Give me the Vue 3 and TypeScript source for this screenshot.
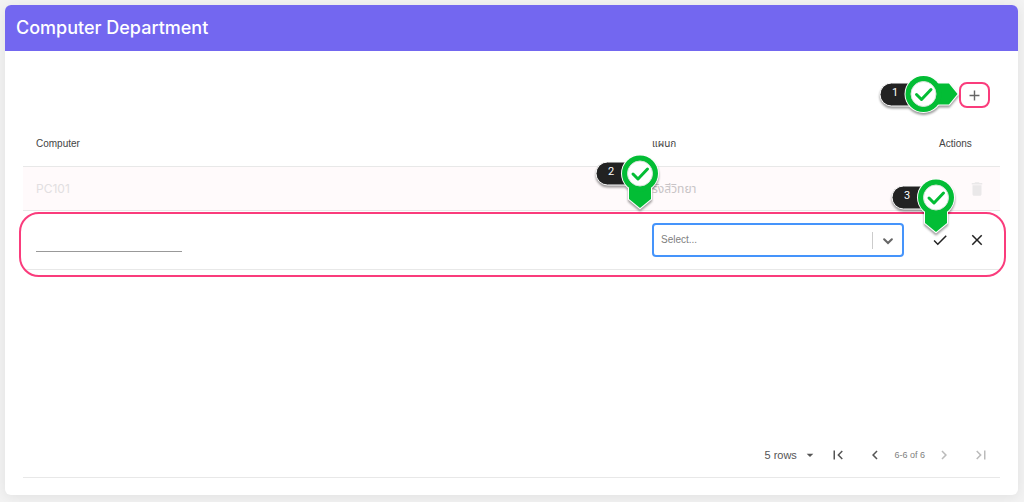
<script setup lang="ts">
import { ref } from 'vue'

interface Computer {
  name: string
  department: string
}

const rows: Computer[] = [{ name: 'PC101', department: 'รังสีวิทยา' }]
const departments = ['รังสีวิทยา']
const name = ref('')
const department = ref('')
const pageSize = ref(5)
</script>

<template>
  <main class="page">
    <section class="card">
      <header class="card-header"><h1>Computer Department</h1></header>
      <div class="card-body">
        <div class="toolbar">
          <div class="anchor">
            <button class="add" type="button" aria-label="Add row">
              <svg width="17" height="17" viewBox="0 0 24 24"><path d="M19 13h-6v6h-2v-6H5v-2h6V5h2v6h6z" /></svg>
            </button>
            <svg class="callout callout-add" width="92" height="50" viewBox="0 0 92 50">
              <g class="shape">
                <rect class="pill" x="4" y="14" width="46" height="23" rx="11.5" />
                <path class="pin" d="M49 13.500h24.500l9.500 11.500-9.500 11.500H49z" />
                <circle class="ring" cx="47.500" cy="25" r="19" />
                <path class="pin-core" d="M49 14.500h24l8.500 10.500-8.500 10.500H49z" />
                <circle class="ring-core" cx="47.500" cy="25" r="18" />
                <circle class="disc" cx="47.500" cy="25" r="12.500" />
                <path class="tick" d="M40.500 25.500l5 5 9.500-10" />
              </g>
              <text x="19" y="27">1</text>
            </svg>
          </div>
        </div>

        <div class="table-wrap">
          <table>
            <thead>
              <tr>
                <th>Computer</th>
                <th class="col-dept">แผนก</th>
                <th class="col-actions">Actions</th>
              </tr>
            </thead>
            <tbody>
              <tr v-for="row in rows" :key="row.name" class="saved">
                <td class="pc">{{ row.name }}</td>
                <td class="dept">{{ row.department }}</td>
                <td class="actions">
                  <div class="buttons">
                    <button type="button" disabled aria-label="Delete">
                      <svg width="18" height="18" viewBox="0 0 24 24"><path d="M6 19c0 1.100.9 2 2 2h8c1.100 0 2-.9 2-2V7H6zM19 4h-3.500l-1-1h-5l-1 1H5v2h14z" /></svg>
                    </button>
                  </div>
                </td>
              </tr>
              <tr class="editing">
                <td>
                  <div class="highlight"></div>
                  <input v-model="name" class="name" type="text" aria-label="Computer" />
                </td>
                <td>
                  <div class="select anchor">
                    <select v-model="department" aria-label="แผนก">
                      <option value="">Select...</option>
                      <option v-for="d in departments" :key="d" :value="d">{{ d }}</option>
                    </select>
                    <span class="indicator">
                      <svg width="14" height="14" viewBox="0 0 20 20"><path d="M4.500 7.500l5.500 5.300 5.500-5.300" /></svg>
                    </span>
                    <svg class="callout callout-dept" width="76" height="64" viewBox="0 0 76 64">
                      <g class="shape">
                        <rect class="pill" x="4" y="12" width="46" height="23" rx="11.500" />
                        <path class="pin" d="M36 26v23.500L48 59.500l12-10V26z" />
                        <circle class="ring" cx="48" cy="23.500" r="19" />
                        <path class="pin-core" d="M37 26v23L48 58l11-9V26z" />
                        <circle class="ring-core" cx="48" cy="23.500" r="18" />
                        <circle class="disc" cx="48" cy="23.500" r="12.500" />
                        <path class="tick" d="M41 24l5 5 9.500-10" />
                      </g>
                      <text x="19" y="25">2</text>
                    </svg>
                  </div>
                </td>
                <td class="actions">
                  <div class="buttons anchor">
                    <button type="button" aria-label="Save">
                      <svg width="18" height="18" viewBox="0 0 24 24"><path d="M9 16.170L4.830 12l-1.420 1.410L9 19 21 7l-1.410-1.410z" /></svg>
                    </button>
                    <button type="button" aria-label="Cancel">
                      <svg width="18" height="18" viewBox="0 0 24 24"><path d="M19 6.410L17.590 5 12 10.590 6.410 5 5 6.410 10.590 12 5 17.590 6.410 19 12 13.410 17.590 19 19 17.590 13.410 12z" /></svg>
                    </button>
                    <svg class="callout callout-save" width="76" height="64" viewBox="0 0 76 64">
                      <g class="shape">
                        <rect class="pill" x="4" y="12" width="46" height="23" rx="11.500" />
                        <path class="pin" d="M36 26v23.500L48 59.500l12-10V26z" />
                        <circle class="ring" cx="48" cy="23.500" r="19" />
                        <path class="pin-core" d="M37 26v23L48 58l11-9V26z" />
                        <circle class="ring-core" cx="48" cy="23.500" r="18" />
                        <circle class="disc" cx="48" cy="23.500" r="12.500" />
                        <path class="tick" d="M41 24l5 5 9.500-10" />
                      </g>
                      <text x="19" y="25">3</text>
                    </svg>
                  </div>
                </td>
              </tr>
            </tbody>
          </table>
        </div>

        <nav class="pager" aria-label="Pagination">
          <div class="page-size">
            <select v-model="pageSize" aria-label="Rows per page">
              <option :value="5">5 rows</option>
              <option :value="10">10 rows</option>
            </select>
            <svg width="16" height="16" viewBox="0 0 24 24"><path d="M7 10l5 5 5-5z" /></svg>
          </div>
          <button type="button" aria-label="First page">
            <svg width="18" height="18" viewBox="0 0 24 24"><path d="M18.410 16.590L13.820 12l4.590-4.590L17 6l-6 6 6 6zM6 6h2v12H6z" /></svg>
          </button>
          <button type="button" aria-label="Previous page">
            <svg width="18" height="18" viewBox="0 0 24 24"><path d="M15.410 7.410L14 6l-6 6 6 6 1.410-1.410L10.830 12z" /></svg>
          </button>
          <span class="range">6-6 of 6</span>
          <button type="button" disabled aria-label="Next page">
            <svg width="18" height="18" viewBox="0 0 24 24"><path d="M10 6L8.590 7.410 13.170 12l-4.580 4.590L10 18l6-6z" /></svg>
          </button>
          <button type="button" disabled aria-label="Last page">
            <svg width="18" height="18" viewBox="0 0 24 24"><path d="M5.590 7.410L10.180 12l-4.590 4.590L7 18l6-6-6-6zM16 6h2v12h-2z" /></svg>
          </button>
        </nav>
      </div>
    </section>
  </main>
</template>

<style>
body {
  margin: 0;
  background: #f3f3f3;
}
</style>

<style scoped>
* {
  box-sizing: border-box;
}

.page {
  display: flex;
  min-height: 100vh;
  padding: 5px 6px 7px 5px;
  font: 10px/16px 'Liberation Sans', 'Noto Sans Thai', sans-serif;
  color: #444;
}

.card {
  flex: 1;
  display: flex;
  flex-direction: column;
  border-radius: 6px;
  background: #fff;
  box-shadow: 0 2px 14px rgba(0, 0, 0, 0.08);
}

.card-header {
  height: 46px;
  padding: 0 11px;
  display: flex;
  align-items: center;
  border-radius: 6px 6px 0 0;
  background: #7367f0;
}

h1 {
  margin: 0;
  font: 500 18px/24px Inter, sans-serif;
  color: #fff;
}

.card-body {
  flex: 1;
  display: flex;
  flex-direction: column;
  padding: 31px 18px 17px;
}

button {
  display: grid;
  place-items: center;
  padding: 0;
  border: 0;
  background: none;
  color: inherit;
}

button svg,
.page-size svg {
  fill: currentColor;
}

.anchor {
  position: relative;
}

.toolbar {
  display: flex;
  justify-content: flex-end;
  padding-right: 10px;
}

.add {
  width: 31px;
  height: 26px;
  border: 2px solid #fa3c7c;
  border-radius: 8px;
  color: #666;
}

.table-wrap {
  flex: 1;
  padding-top: 13px;
}

table {
  width: 100%;
  table-layout: fixed;
  border-collapse: separate;
  border-spacing: 0;
}

th,
td {
  padding: 0 13px;
  border-bottom: 1px solid #e8e8e8;
  text-align: left;
  font-weight: 400;
}

th {
  height: 46px;
}

.col-dept {
  width: 278px;
}

.col-actions {
  width: 83px;
  padding: 0 0 0 22px;
}

.saved td {
  height: 44px;
  background: #fffafb;
  color: #e2dfe1;
}

.saved .pc {
  font: 12px/16px Inter, sans-serif;
}

.saved .dept {
  font-size: 12px;
  color: #c8c4c6;
}

.editing {
  position: relative;
}

.editing td {
  height: 59px;
}

.highlight {
  position: absolute;
  inset: 1px -6px -7px -4px;
  border: 2px solid #fa3c7c;
  border-radius: 20px;
  pointer-events: none;
}

.name {
  display: block;
  width: 146px;
  height: 24px;
  padding: 0;
  border: 0;
  border-bottom: 1px solid #999;
  background: none;
  font: inherit;
  outline: 0;
}

.select {
  display: flex;
}

.select select {
  flex: 1;
  height: 34px;
  padding: 0 40px 0 7px;
  border: 2px solid #4594fb;
  border-radius: 4px;
  appearance: none;
  background: #fff;
  font: inherit;
  color: #808080;
}

.indicator {
  position: absolute;
  top: 9px;
  right: 1px;
  bottom: 8px;
  width: 31px;
  display: grid;
  place-items: center;
  border-left: 1px solid #ccc;
  pointer-events: none;
}

.indicator path {
  fill: none;
  stroke: #666;
  stroke-width: 3;
  stroke-linecap: round;
}

td.actions {
  padding: 0 14px;
  color: #222;
}

.saved td.actions {
  color: #eae8e9;
}

.buttons {
  display: flex;
  justify-content: flex-end;
  gap: 19px;
}

.callout {
  position: absolute;
  z-index: 2;
  pointer-events: none;
}

.callout-add {
  top: -13px;
  left: -83px;
}

.callout-dept {
  top: -73px;
  left: -60px;
}

.callout-save {
  top: -57px;
  left: -43px;
}

.shape {
  filter: drop-shadow(0 2px 1px rgba(0, 0, 0, 0.4));
}

.pill {
  fill: #222;
  stroke: #fff;
}

.pin,
.ring,
.disc {
  fill: #fff;
}

.disc {
  stroke: #d5e5d8;
}

.pin-core,
.ring-core {
  fill: #03bd35;
}

.tick {
  fill: none;
  stroke: #03bd35;
  stroke-width: 3;
  stroke-linecap: round;
  stroke-linejoin: round;
}

.callout text {
  fill: #fff;
  font: 11px Roboto, sans-serif;
  text-anchor: middle;
}

.pager {
  display: flex;
  align-items: center;
  justify-content: flex-end;
  height: 46px;
  padding-right: 10px;
  border-bottom: 1px solid #e8e8e8;
  color: #555;
}

.pager button:disabled {
  color: #bbb;
}

.page-size {
  display: flex;
  align-items: center;
  margin-right: 11px;
}

.page-size select {
  width: 38px;
  padding: 0;
  border: 0;
  appearance: none;
  background: none;
  font: inherit;
  font-size: 11px;
  color: inherit;
}

.pager button + button {
  margin-left: 19px;
}

.range {
  margin: 0 10px;
  font-size: 9px;
  color: #808080;
}
</style>
